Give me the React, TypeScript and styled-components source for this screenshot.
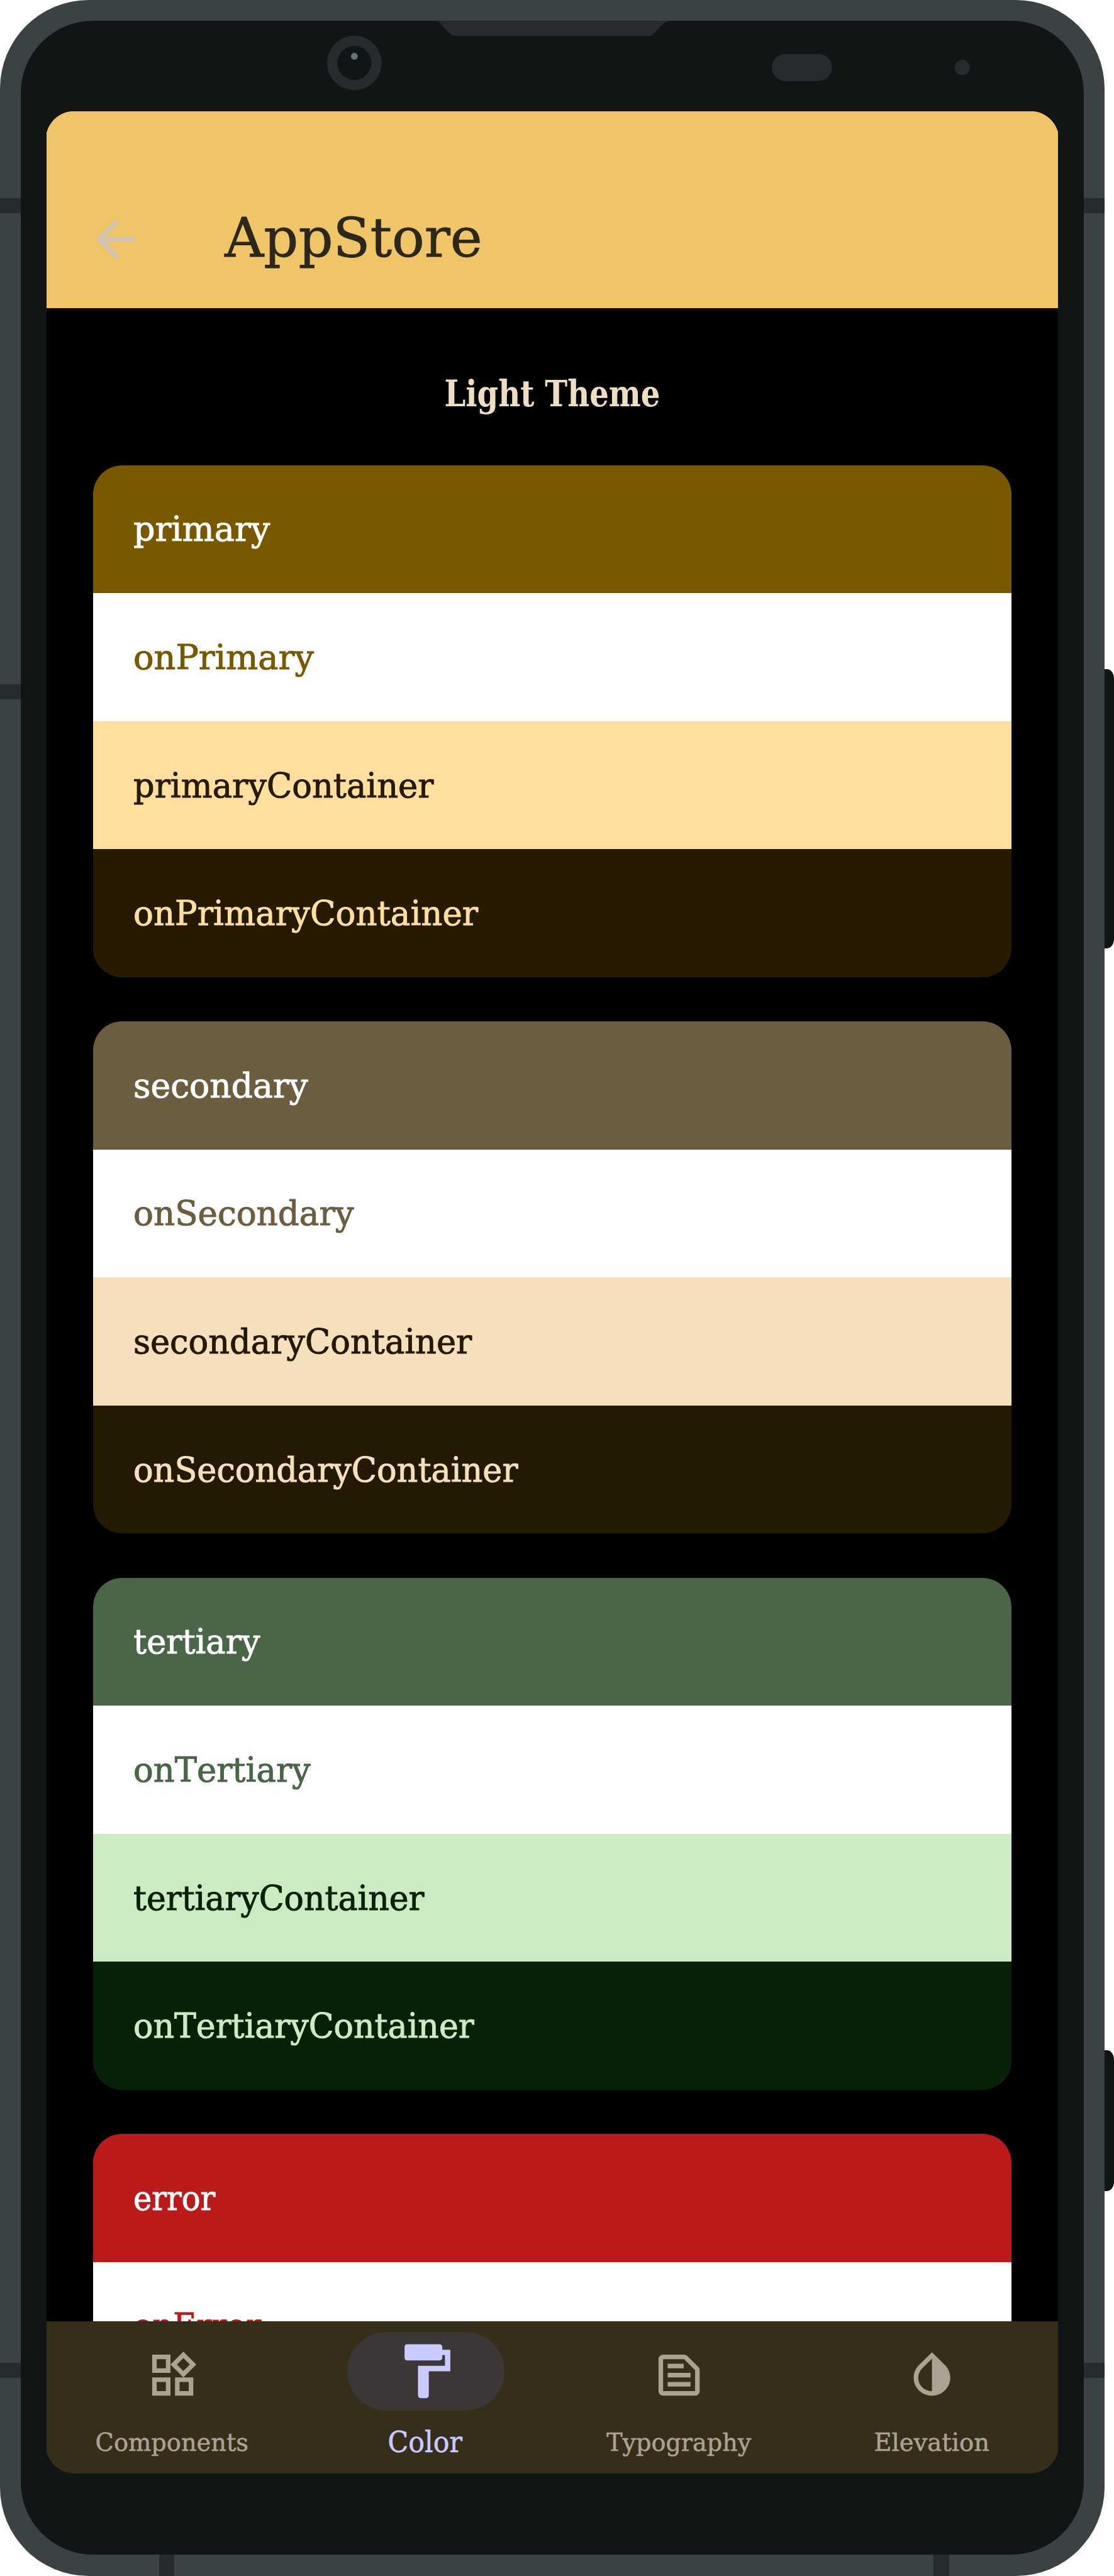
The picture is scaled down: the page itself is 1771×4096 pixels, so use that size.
import React from "react";
import styled, { createGlobalStyle } from "styled-components";

const slab = `"DejaVu Serif", "Liberation Serif", serif`;

const GlobalStyle = createGlobalStyle`
  *, *::before, *::after { box-sizing: border-box; }
  body { margin: 0; background: #ffffff; font-family: ${slab}; font-kerning: none; }
`;

/* ---------- device ---------- */

const Stage = styled.main`
  position: relative;
  width: 1771px;
  height: 4096px;
  overflow: hidden;
  background: #ffffff;
`;

const SideButton = styled.span<{ $top: number; $height: number }>`
  position: absolute;
  left: 1740px;
  top: ${(p) => p.$top}px;
  width: 31px;
  height: ${(p) => p.$height}px;
  background: #111515;
  border-radius: 0 11px 11px 0 / 0 15px 15px 0;
`;

const Frame = styled.div`
  position: relative;
  width: 1756.3px;
  height: 4096px;
  padding: 33.2px 33.3px 34px 33.4px;
  border-radius: 141px;
  overflow: hidden;
  background: #3b4244;
`;

const Band = styled.span<{ $x: number; $y: number; $w: number; $h: number }>`
  position: absolute;
  left: ${(p) => p.$x}px;
  top: ${(p) => p.$y}px;
  width: ${(p) => p.$w}px;
  height: ${(p) => p.$h}px;
  background: #262b2d;
`;

const Bezel = styled.div`
  position: relative;
  height: 100%;
  padding: 143.4px 40.7px 129px 40.6px;
  border-radius: 115px;
  background: #111515;
`;

const Sensors = styled.svg`
  position: absolute;
  left: 0;
  top: 0;
  width: 1756px;
  height: 160px;
`;

const Screen = styled.div`
  height: 100%;
  display: flex;
  flex-direction: column;
  background: #000000;
  clip-path: inset(0 -1.5px 0 -1.5px round 46px);
`;

/* ---------- app bar ---------- */

const AppBar = styled.header`
  flex: none;
  height: 313px;
  padding: 113px 0 0 62.7px;
  display: flex;
  align-items: flex-start;
  background: #efc568;
`;

const BackButton = styled.span`
  display: flex;
  margin-top: 43px;
  color: #d0c5b4;
`;

const Title = styled.h1`
  margin: 28px 0 0 126px;
  font-size: 86px;
  line-height: 120px;
  font-weight: 400;
  color: #2c271b;
  transform-origin: left;
  -webkit-text-stroke: 0.8px currentColor;
`;

/* ---------- theme list ---------- */

const Content = styled.section`
  flex: 1;
  min-height: 0;
  overflow: hidden;
  padding: 0 74.1px 0 74.4px;
`;

const Heading = styled.h2`
  margin: 0;
  height: 250.1px;
  padding-top: 96px;
  text-align: center;
  font-size: 57px;
  line-height: 80px;
  font-weight: 700;
  white-space: nowrap;
  color: #eddec2;
  transform: scaleX(0.845);
`;

const Groups = styled.div`
  display: flex;
  flex-direction: column;
  gap: 70.3px;
`;

const Group = styled.ul`
  flex: none;
  margin: 0;
  padding: 0;
  list-style: none;
  border-radius: 46px;
  overflow: hidden;
`;

const Swatch = styled.li<{ $bg: string; $fg: string }>`
  height: 203.55px;
  padding-left: 63.5px;
  display: flex;
  align-items: center;
  background: ${(p) => p.$bg};
  color: ${(p) => p.$fg};
`;

const SwatchName = styled.span<{ $fit: number }>`
  font-size: 54.5px;
  line-height: 64px;
  transform: scaleX(${(p) => p.$fit});
  transform-origin: left;
  -webkit-text-stroke: 1px currentColor;
`;

/* ---------- navigation ---------- */

const NavBar = styled.nav`
  flex: none;
  height: 242.5px;
  display: grid;
  grid-template-columns: repeat(4, 1fr);
  background: #362d1b;
`;

const NavItem = styled.div<{ $active?: boolean }>`
  display: flex;
  flex-direction: column;
  align-items: center;
  padding-top: 17.7px;
  color: ${(p) => (p.$active ? "#c9caff" : "#aba293")};
`;

const Indicator = styled.span<{ $active?: boolean }>`
  width: 250.7px;
  height: 125.3px;
  border-radius: 63px;
  display: flex;
  align-items: center;
  justify-content: center;
  padding-top: ${(p) => (p.$active ? 0 : 11)}px;
  background: ${(p) => (p.$active ? "#3d3636" : "transparent")};
`;

const NavLabel = styled.span<{ $active?: boolean; $fit: number; $trim: number }>`
  margin-top: ${(p) => (p.$active ? 20 : 21)}px;
  margin-right: ${(p) => p.$trim}px;
  font-size: ${(p) => (p.$active ? 46 : 38.5)}px;
  line-height: 60px;
  white-space: nowrap;
  transform: scaleX(${(p) => p.$fit});
  -webkit-text-stroke: 0.6px currentColor;
`;

const Icon = ({ d, size }: { d: string; size: number }) => (
  <svg width={size} height={size} viewBox="0 0 24 24" fill="currentColor" aria-hidden>
    <path d={d} />
  </svg>
);

const icons = {
  back: "M20 11.07H7.7l5.65-5.65L12 4l-8 8 8 8 1.35-1.42L7.7 12.93H20z",
  widgets:
    "M16.66 4.52l2.83 2.83-2.83 2.83-2.83-2.83 2.83-2.83M9 5v4H5V5h4m10 10v4h-4v-4h4M9 15v4H5v-4h4m7.66-13.31L11 7.34 16.66 13l5.66-5.66-5.66-5.65zM11 3H3v8h8V3zm10 10h-8v8h8v-8zm-10 0H3v8h8v-8z",
  paint:
    "M18 4V3c0-.55-.45-1-1-1H5c-.55 0-1 .45-1 1v4c0 .55.45 1 1 1h12c.55 0 1-.45 1-1V6h1v4H9v11c0 .55.45 1 1 1h2c.55 0 1-.45 1-1v-9h8V4h-3z",
  snippet:
    "M14.17 5L19 9.83V19H5V5h9.17m0-2H5c-1.1 0-2 .9-2 2v14c0 1.1.9 2 2 2h14c1.1 0 2-.9 2-2V9.83c0-.53-.21-1.04-.59-1.41l-4.83-4.83c-.37-.38-.88-.59-1.41-.59zM7 15h10v2H7v-2zm0-4h10v2H7v-2zm0-4h7v2H7V7z",
  invert:
    "M12 4.81V19c-3.31 0-6-2.63-6-5.87 0-1.56.62-3.03 1.75-4.14L12 4.81M6.35 7.56C4.9 8.99 4 10.96 4 13.13 4 17.48 7.58 21 12 21s8-3.52 8-7.87c0-2.17-.9-4.14-2.35-5.57L12 2 6.35 7.56z",
};

type Row = { name: string; bg: string; fg: string; fit: number };

const groups: Row[][] = [
  [
    { name: "primary", bg: "#785900", fg: "#ffffff", fit: 0.99 },
    { name: "onPrimary", bg: "#ffffff", fg: "#785900", fit: 0.993 },
    { name: "primaryContainer", bg: "#ffdf9e", fg: "#261a00", fit: 0.966 },
    { name: "onPrimaryContainer", bg: "#261a00", fg: "#ffdf9e", fit: 0.972 },
  ],
  [
    { name: "secondary", bg: "#6b5d3f", fg: "#ffffff", fit: 0.982 },
    { name: "onSecondary", bg: "#ffffff", fg: "#6b5d3f", fit: 0.974 },
    { name: "secondaryContainer", bg: "#f5e0bb", fg: "#241a04", fit: 0.965 },
    { name: "onSecondaryContainer", bg: "#241a04", fg: "#f5e0bb", fit: 0.963 },
  ],
  [
    { name: "tertiary", bg: "#4a6547", fg: "#ffffff", fit: 0.965 },
    { name: "onTertiary", bg: "#ffffff", fg: "#4a6547", fit: 0.968 },
    { name: "tertiaryContainer", bg: "#cceac4", fg: "#072109", fit: 0.956 },
    { name: "onTertiaryContainer", bg: "#072109", fg: "#cceac4", fit: 0.957 },
  ],
  [
    { name: "error", bg: "#ba1a1a", fg: "#ffffff", fit: 0.91 },
    { name: "onError", bg: "#ffffff", fg: "#ba1a1a", fit: 0.93 },
  ],
];

const tabs = [
  { label: "Components", icon: icons.widgets, active: false, fit: 0.995, trim: 3 },
  { label: "Color", icon: icons.paint, active: true, fit: 0.93, trim: 2 },
  { label: "Typography", icon: icons.snippet, active: false, fit: 0.99, trim: 0 },
  { label: "Elevation", icon: icons.invert, active: false, fit: 1, trim: 0 },
];

const bands = [
  [0, 315, 34, 24],
  [1722.5, 315, 34, 24],
  [0, 1088, 34, 24],
  [0, 3757, 34, 23.6],
  [1722.5, 3757, 34, 23.6],
  [253, 4061, 24, 35],
  [1484, 4061, 24.5, 35],
];

export default function App() {
  return (
    <Stage>
      <GlobalStyle />
      <SideButton $top={1064.3} $height={444} />
      <SideButton $top={3260.2} $height={224.3} />
      <Frame>
        {bands.map(([x, y, w, h], i) => (
          <Band key={i} $x={x} $y={y} $w={w} $h={h} />
        ))}
        <Bezel>
          <Screen>
            <AppBar>
              <BackButton>
                <Icon d={icons.back} size={94.6} />
              </BackButton>
              <Title>AppStore</Title>
            </AppBar>
            <Content>
              <Heading>Light Theme</Heading>
              <Groups>
                {groups.map((rows) => (
                  <Group key={rows[0].name}>
                    {rows.map((row) => (
                      <Swatch key={row.name} $bg={row.bg} $fg={row.fg}>
                        <SwatchName $fit={row.fit}>{row.name}</SwatchName>
                      </Swatch>
                    ))}
                  </Group>
                ))}
              </Groups>
            </Content>
            <NavBar>
              {tabs.map((tab) => (
                <NavItem key={tab.label} $active={tab.active}>
                  <Indicator $active={tab.active}>
                    <Icon d={tab.icon} size={tab.active ? 102.8 : 87.2} />
                  </Indicator>
                  <NavLabel $active={tab.active} $fit={tab.fit} $trim={tab.trim}>
                    {tab.label}
                  </NavLabel>
                </NavItem>
              ))}
            </NavBar>
          </Screen>
        </Bezel>
        <Sensors viewBox="0 0 1756 160" aria-hidden>
          <path
            d="M692 33.2C698 33.5 701 37 704 42L715 53Q719 57.2 726 57.2H1030Q1036 57.2 1040 53L1052 40Q1058 33.5 1066 33.2Z"
            fill="#262b2d"
          />
          <circle cx="563.3" cy="100.1" r="43.3" fill="#262b2d" />
          <circle cx="563.3" cy="100.1" r="27.1" fill="#111515" />
          <circle cx="563.3" cy="89.5" r="5.4" fill="#677479" />
          <rect x="1227.1" y="85.8" width="95.5" height="43.2" rx="21.6" fill="#262b2d" />
          <circle cx="1529.8" cy="107.3" r="12.2" fill="#262b2d" />
        </Sensors>
      </Frame>
    </Stage>
  );
}
